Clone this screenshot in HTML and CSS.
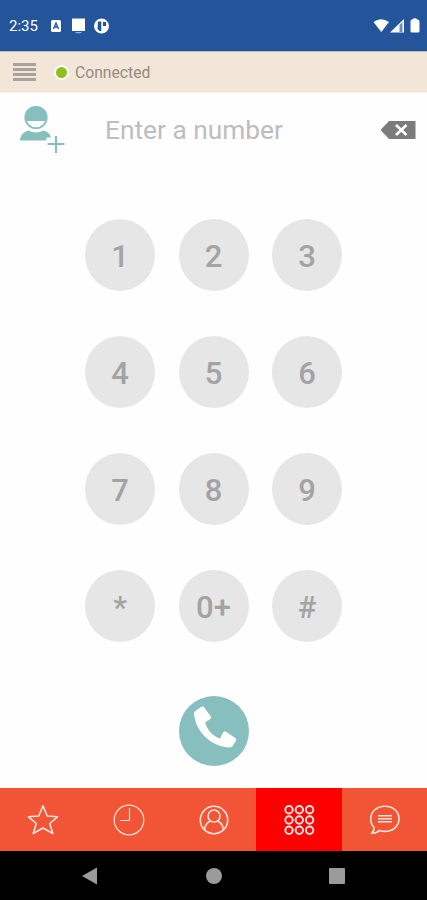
FILE: index.html
```html
<!DOCTYPE html>
<html lang="en">
  <head>
    <meta charset="UTF-8" />
    <meta name="viewport" content="width=device-width, initial-scale=1.0" />
    <title>Dialer</title>
    <link rel="stylesheet" href="styles.css">
  </head>
  <body>
    <div class="phone">
      <!-- Status bar -->
      <div class="status-bar">
        <span class="time">2:35</span>
        <svg class="status-left" width="62" height="18" viewBox="0 0 62 18">
          <rect x="1" y="3" width="10" height="12" rx="1.5" fill="#fff" />
          <path d="M3.5 12 6 6l2.500 6M4.500 10h3" fill="none" stroke="#24559b" stroke-width="1.300" />
          <path d="M22 1.500h13V14H22z" fill="#fff" />
          <path d="M25 15h7l-1.500 1.300h-4z" fill="#9fb5d5" />
          <circle cx="51.500" cy="9" r="7.500" fill="#fff" />
          <path d="M48 4.500h3.300v9.500h-1.800L47.500 12zM53 5h3v4h-3z" fill="#24559b" />
        </svg>
        <svg class="status-right" width="48" height="16" viewBox="0 0 48 16">
          <path d="M0.500 4Q8 -1.500 16 4L8.300 14z" fill="#fff" />
          <path d="M17 14.500 31 1v13.500z" fill="#fff" />
          <path d="M26.500 7 29.500 4v10h-3z" fill="#6d8cba" />
          <path d="M37.500 3q0-1 1.500-1.500Q42-1 44.500 1.500 46.500 2 46.500 3.500V13q0 1.500-1.500 1.500h-6q-1.500 0-1.500-1.500z" fill="#fff" />
        </svg>
      </div>

      <!-- Connection bar -->
      <header class="connection">
        <button class="menu" aria-label="Menu">
          <span></span><span></span><span></span><span></span>
        </button>
        <span class="dot"></span>
        <span class="state">Connected</span>
      </header>

      <!-- Number entry -->
      <div class="entry">
        <svg class="add-contact" width="46" height="48" viewBox="0 0 46 48">
          <path d="M0 35.500c.3-5 3-8.500 8.500-10q7.500 4 15 0c4 1 6.500 3.500 7.500 7h-4.500v3z" fill="#86bfbe" />
          <circle cx="16" cy="12.500" r="10.700" fill="#fefefe" stroke="#86bfbe" stroke-width="1.800" />
          <path d="M5 12.500a11 11 0 1 1 22 0q0 3.500-3 3.500H8q-3 0-3-3.500z" fill="#86bfbe" />
          <path d="M36 31v17M27.500 39h17" stroke="#86bfbe" stroke-width="2.200" />
        </svg>
        <span class="placeholder">Enter a number</span>
        <svg class="backspace" width="36" height="18" viewBox="0 0 36 18">
          <path d="M0.500 9 9 0h26.500v18H9z" fill="#7b7b7b" />
          <path d="M16 4 26.500 14M26.500 4 16 14" stroke="#fff" stroke-width="2.600" />
        </svg>
      </div>

      <!-- Keypad -->
      <main class="keypad">
        <button class="key">1</button>
        <button class="key">2</button>
        <button class="key">3</button>
        <button class="key">4</button>
        <button class="key">5</button>
        <button class="key">6</button>
        <button class="key">7</button>
        <button class="key">8</button>
        <button class="key">9</button>
        <button class="key">*</button>
        <button class="key">0+</button>
        <button class="key">#</button>
      </main>

      <button class="call" aria-label="Call">
        <svg width="70" height="70" viewBox="0 0 70 70">
          <path d="M15.500 20.500Q13.500 17 17 14.500l5-3.500q2-1 3.300.5l6.500 9q.7 1.500-.5 2.500l-5.300 3.500c2 7 7.500 13.500 15 16l3-6q1-1.700 3-.8l9 6q1.800 1 1 3l-3.500 5.500q-2 2.200-6 1C33 49.500 18 37.500 15.500 20.500z" fill="#fff" />
        </svg>
      </button>

      <!-- Tabs -->
      <nav class="tabs">
        <a class="tab">
          <svg width="32" height="32" viewBox="0 0 32 32">
            <path d="M16 1.800 20.200 12 30.500 12.800 22.700 19.500 25.800 29.500 16 24 6.200 29.500 9.300 19.500 1.500 12.800 11.800 12z" />
          </svg>
        </a>
        <a class="tab">
          <svg class="thin" width="34" height="32" viewBox="0 0 34 32">
            <circle cx="18" cy="16" r="14.800" />
            <path d="M18.500 4v12.500H9" />
          </svg>
        </a>
        <a class="tab">
          <svg width="32" height="32" viewBox="0 0 32 32">
            <circle cx="16" cy="16" r="13.700" />
            <circle cx="16" cy="12" r="6" />
            <path d="M6.500 25.500Q7.500 19 12.500 17M25.500 25.500Q24.500 19 19.500 17" />
          </svg>
        </a>
        <a class="tab active">
          <svg class="bold" width="32" height="32" viewBox="0 0 32 32">
            <circle cx="6" cy="5.700" r="3.700" /><circle cx="16.300" cy="5.700" r="3.700" /><circle cx="26.600" cy="5.700" r="3.700" />
            <circle cx="6" cy="16" r="3.700" /><circle cx="16.300" cy="16" r="3.700" /><circle cx="26.600" cy="16" r="3.700" />
            <circle cx="6" cy="26.300" r="3.700" /><circle cx="16.300" cy="26.300" r="3.700" /><circle cx="26.600" cy="26.300" r="3.700" />
          </svg>
        </a>
        <a class="tab">
          <svg width="32" height="32" viewBox="0 0 32 32">
            <path d="M6 23.500C4 21.500 2.700 18.500 2.700 14.800 2.700 7.500 9 2.200 17 2.200s14 5.300 14 12.600S25 27.400 17 27.400q-3 0-5.500-1Q8.500 29.500 3.500 29.300 6.500 27 6 23.500z" />
            <path d="M10 11.700h14M10 14.700h14M10 17.700h14" />
          </svg>
        </a>
      </nav>

      <!-- System buttons -->
      <footer class="system">
        <div class="system-btn"><svg width="18" height="18" viewBox="0 0 18 18"><path d="M1 9 16 .5v17z" /></svg></div>
        <div class="system-btn"><svg width="18" height="18" viewBox="0 0 18 18"><circle cx="9" cy="9" r="8" /></svg></div>
        <div class="system-btn"><svg width="18" height="18" viewBox="0 0 18 18"><rect x="1" y="1" width="16" height="16" rx="1" /></svg></div>
      </footer>
    </div>
  </body>
</html>
```
FILE: styles.css
```css
* {
  box-sizing: border-box;
}

body {
  margin: 0;
  background-color: #fefefe;
  font-family: Roboto, sans-serif;
}

button {
  padding: 0;
  border: none;
  font-family: inherit;
  cursor: pointer;
}

svg {
  display: block;
  flex-shrink: 0;
}

.phone {
  width: 427px;
  height: 900px;
  display: flex;
  flex-direction: column;
  overflow: hidden;
}

.status-bar {
  height: 51px;
  padding: 1px 6px 0 9px;
  display: flex;
  align-items: center;
  background-color: #24559b;
  color: #fff;
}

.time {
  width: 41px;
  font-size: 15px;
}

.status-right {
  margin-left: auto;
}

.connection {
  height: 42px;
  padding-left: 13px;
  display: flex;
  align-items: center;
  background-color: #f1e6d8;
  border-top: 1px solid #b9bcc4;
  border-bottom: 1px solid #f8f2ea;
}

.menu {
  width: 23px;
  height: 19px;
  display: flex;
  flex-direction: column;
  justify-content: space-between;
  background: none;
}

.menu span {
  height: 3px;
  background-color: #aaa29e;
}

.dot {
  width: 15px;
  height: 15px;
  margin: 0 6px 0 18px;
  border: 2px solid #fff;
  border-radius: 50%;
  background-color: #91bf1b;
}

.state {
  color: #958b82;
  font-size: 15.7px;
}

.entry {
  height: 72px;
  padding: 0 11px 0 20px;
  display: flex;
  align-items: center;
}

.placeholder {
  margin: 2px 0 0 39px;
  color: #bdbdbd;
  font-size: 26.3px;
}

.backspace {
  margin: 2px 0 0 auto;
}

.keypad {
  margin: 54px 0 0 85px;
  display: grid;
  grid-template-columns: repeat(3, 70px);
  grid-auto-rows: 72px;
  gap: 45px 23.5px;
}

.key {
  padding-top: 2px;
  border-radius: 50%;
  background-color: #e6e6e6;
  color: #a3a3a3;
  font-size: 31px;
  font-weight: 500;
}

.call {
  width: 70px;
  height: 70px;
  margin: 54px auto 0;
  border-radius: 50%;
  background-color: #86bfbe;
}

.tabs {
  height: 63px;
  margin-top: auto;
  display: flex;
  background-color: #f15535;
}

.tab {
  flex: 1;
  display: flex;
  align-items: center;
  justify-content: center;
}

.tab.active {
  background-color: #fe0000;
}

.tab svg {
  fill: none;
  stroke: #ffe3dc;
  stroke-width: 1.6;
  stroke-linejoin: round;
}

.tab .thin {
  stroke-width: 1.2;
}

.tab .bold {
  stroke-width: 2;
}

.system {
  height: 49px;
  padding: 0 28px;
  display: flex;
  align-items: center;
  background-color: #000;
}

.system-btn {
  flex: 1;
  display: flex;
  justify-content: center;
}

.system-btn svg {
  fill: #9b9b9b;
}
```
